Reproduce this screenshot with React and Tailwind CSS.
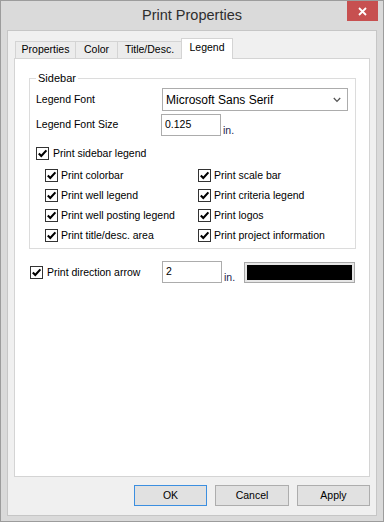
import React from 'react';

const Check = () => (
  <span className="w-[13px] h-[13px] border border-[#333333] bg-white flex items-center justify-center shrink-0">
    <svg width="11" height="11" viewBox="0 0 11 11">
      <path d="M1.8 5.4 L4.3 8 L9.4 2.4" stroke="#000" strokeWidth="2.1" fill="none" />
    </svg>
  </span>
);

const CheckRow = ({ label, gap = 'gap-[3px]' }) => (
  <div className={`flex items-center h-[13px] ${gap}`}>
    <Check />
    <span className="leading-[13px] whitespace-nowrap">{label}</span>
  </div>
);

const tabs = [
  { label: 'Properties', w: 'w-[61px]' },
  { label: 'Color', w: 'w-[43px]' },
  { label: 'Title/Desc.', w: 'w-[65px]' },
];

const leftItems = ['Print colorbar', 'Print well legend', 'Print well posting legend', 'Print title/desc. area'];
const rightItems = ['Print scale bar', 'Print criteria legend', 'Print logos', 'Print project information'];

const App = () => {
  return (
    <div className="w-[384px] h-[522px] bg-[#dadada] border border-[#9c9c9c] flex flex-col font-['Liberation_Sans',Arial,sans-serif] text-[10.5px] text-black">
      {/* Title bar */}
      <div className="relative h-[29px] flex items-center justify-center text-[14.5px] text-[#2e2e2e]">
        Print Properties
        <div className="absolute right-[5px] top-0 w-[31px] h-[20px] bg-[#c75050] flex items-center justify-center">
          <svg width="9" height="9" viewBox="0 0 9 9">
            <path d="M1 1 L8 8 M8 1 L1 8" stroke="#fff" strokeWidth="1.8" />
          </svg>
        </div>
      </div>

      {/* Client area */}
      <div className="flex-1 mx-[6px] mb-[5px] bg-[#f0f0f0] border border-[#c6c6c6] flex flex-col px-[6px] pt-[7px] pb-[9px]">
        {/* Tabs */}
        <div className="h-[20px] flex items-end pl-px">
          {tabs.map((t, i) => (
            <div
              key={t.label}
              className={`${t.w} h-[17px] ${i > 0 ? '-ml-px' : ''} border border-b-0 border-[#d4d4d4] bg-[#ececec] flex items-center justify-center`}
            >
              {t.label}
            </div>
          ))}
          <div className="w-[52px] h-[21px] -ml-px -mb-px relative z-10 border border-b-0 border-[#d4d4d4] bg-white flex items-center justify-center pb-[2px]">
            Legend
          </div>
        </div>

        {/* Panel */}
        <div className="flex-1 bg-white border border-[#d4d4d4] pl-[14px] pt-[12px]">
          <fieldset className="w-[327px] border border-[#dcdcdc] px-[6px] pb-[6px]">
            <legend className="px-[2px] leading-[14px] text-[11px]">Sidebar</legend>

            <div className="flex items-center h-[23px] mt-[3px]">
              <span className="w-[126px]">Legend Font</span>
              <div className="w-[186px] h-[23px] border border-[#acacac] bg-white flex items-center justify-between pl-[3px] pr-[6px]">
                <span className="text-[12px]">Microsoft Sans Serif</span>
                <svg width="8" height="6" viewBox="0 0 8 6">
                  <path d="M0.8 1 L4 4.4 L7.2 1" stroke="#555" strokeWidth="1.3" fill="none" />
                </svg>
              </div>
            </div>

            <div className="flex items-center h-[22px] mt-[3px]">
              <span className="w-[125px]">Legend Font Size</span>
              <div className="w-[60px] h-[22px] border border-[#acacac] bg-white pl-[3px] pt-[3px] leading-[12px]">0.125</div>
              <span className="self-end ml-[2px] leading-[12px] text-[#1c1c4c]">in.</span>
            </div>

            <div className="mt-[11px]">
              <CheckRow label="Print sidebar legend" gap="gap-[4px]" />
            </div>

            <div className="mt-[9px] pl-[9px] flex">
              <div className="w-[153px] flex flex-col gap-[7px]">
                {leftItems.map((l) => (
                  <CheckRow key={l} label={l} />
                ))}
              </div>
              <div className="flex flex-col gap-[7px]">
                {rightItems.map((l) => (
                  <CheckRow key={l} label={l} />
                ))}
              </div>
            </div>
          </fieldset>

          <div className="mt-[12px] ml-px flex items-center h-[22px]">
            <div className="w-[132px]">
              <CheckRow label="Print direction arrow" gap="gap-[4px]" />
            </div>
            <div className="w-[60px] h-[22px] border border-[#acacac] bg-white pl-[3px] flex items-center">2</div>
            <span className="w-[22px] self-end pl-[2px] leading-[12px] text-[#1c1c4c]">in.</span>
            <div className="w-[111px] h-[21px] border border-[#a8a8a8] bg-[#e6e6e6] p-[2px]">
              <div className="w-full h-full bg-black" />
            </div>
          </div>
        </div>

        {/* Buttons */}
        <div className="mt-[8px] flex justify-end gap-[8px]">
          <div className="w-[73px] h-[21px] border border-[#3c8fe0] bg-[#e1e1e1] flex items-center justify-center">OK</div>
          <div className="w-[74px] h-[21px] border border-[#adadad] bg-[#e1e1e1] flex items-center justify-center">Cancel</div>
          <div className="w-[73px] h-[21px] border border-[#adadad] bg-[#e1e1e1] flex items-center justify-center">Apply</div>
        </div>
      </div>
    </div>
  );
};

export default App;
